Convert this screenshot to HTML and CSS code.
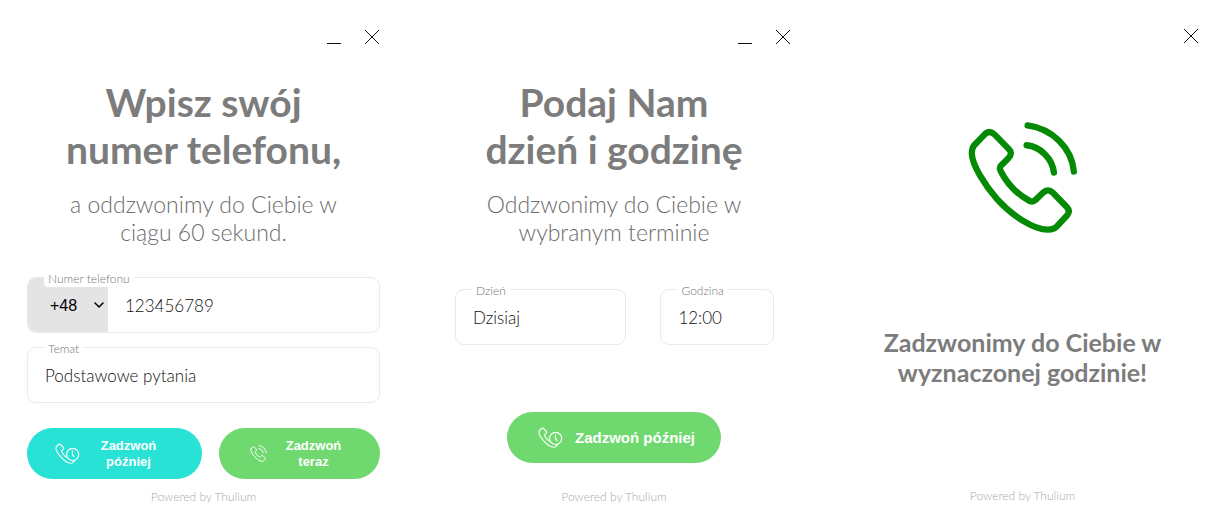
FILE: index.html
```html
<!DOCTYPE html>
<html lang="pl">
<head>
<meta charset="utf-8">
<title>Zamów rozmowę</title>
<meta name="viewport" content="width=device-width, initial-scale=1">
<link rel="stylesheet" href="styles.css">
</head>
<body>
<svg class="sprite" aria-hidden="true">
  <symbol id="call" viewBox="20 20 336 340">
    <path d="M42 92 L72 61 Q87 45 103 61 L144 103 Q159 117 144 132 L123 153 Q115 160 121 171 C140 208 173 242 209 261 Q218 265 225 258 L248 236 Q263 221 278 236 L319 278 Q332 291 320 305 L292 335 Q283 347 262 347 C220 347 155 305 110 255 C75 215 34 152 34 118 Q34 101 42 92 Z"/>
    <path d="M202 33 C275 43 335 100 341 172"/>
    <path d="M199 93 C240 97 277 133 281 175"/>
  </symbol>
  <symbol id="later" viewBox="22 38 375 320">
    <path d="M42 92 L72 61 Q87 45 103 61 L144 103 Q159 117 144 132 L123 153 Q115 160 121 171 C140 208 173 242 209 261 Q218 265 225 258 L248 236 Q263 221 278 236 L319 278 Q332 291 320 305 L292 335 Q283 347 262 347 C220 347 155 305 110 255 C75 215 34 152 34 118 Q34 101 42 92 Z"/>
    <circle cx="288" cy="212" r="92" class="dial"/>
    <path d="M285 158 V216 L308 246"/>
  </symbol>
  <symbol id="close" viewBox="0 0 16 16"><path d="M1 1 L15 15 M15 1 L1 15"/></symbol>
  <symbol id="minimize" viewBox="0 0 16 16"><path d="M1 14.5 H15"/></symbol>
</svg>
<main class="panels">
  <form class="panel">
    <div class="bar">
      <button type="button" class="tool" aria-label="Minimalizuj"><svg><use href="#minimize"/></svg></button>
      <button type="button" class="tool" aria-label="Zamknij"><svg><use href="#close"/></svg></button>
    </div>
    <h1>Wpisz swój<br>numer telefonu,</h1>
    <p class="lead">a oddzwonimy do Ciebie w<br>ciągu 60 sekund.</p>
    <div class="fields stacked">
      <div class="field">
        <label for="phone">Numer telefonu</label>
        <div class="prefix">
          <select aria-label="Numer kierunkowy"><option>+48</option></select>
          <svg class="chevron" viewBox="0 0 20 12" aria-hidden="true"><path d="M2 2 L10 10 L18 2"/></svg>
        </div>
        <input id="phone" type="tel" value="123456789">
      </div>
      <div class="field">
        <label for="topic">Temat</label>
        <select id="topic"><option>Podstawowe pytania</option></select>
      </div>
    </div>
    <div class="actions">
      <button type="button" class="action cyan"><svg class="icon-later"><use href="#later"/></svg><span>Zadzwoń<br>później</span></button>
      <button type="button" class="action now"><svg class="icon-call"><use href="#call"/></svg><span>Zadzwoń<br>teraz</span></button>
    </div>
    <footer>Powered by Thulium</footer>
  </form>

  <form class="panel">
    <div class="bar">
      <button type="button" class="tool" aria-label="Minimalizuj"><svg><use href="#minimize"/></svg></button>
      <button type="button" class="tool" aria-label="Zamknij"><svg><use href="#close"/></svg></button>
    </div>
    <h1>Podaj Nam<br>dzień i godzinę</h1>
    <p class="lead">Oddzwonimy do Ciebie w<br>wybranym terminie</p>
    <div class="fields paired">
      <div class="field">
        <label for="day">Dzień</label>
        <select id="day"><option>Dzisiaj</option></select>
      </div>
      <div class="field">
        <label for="hour">Godzina</label>
        <select id="hour"><option>12:00</option></select>
      </div>
    </div>
    <div class="actions single">
      <button type="button" class="action wide"><svg class="icon-later"><use href="#later"/></svg><span>Zadzwoń później</span></button>
    </div>
    <footer>Powered by Thulium</footer>
  </form>

  <section class="panel done">
    <div class="bar">
      <button type="button" class="tool" aria-label="Zamknij"><svg><use href="#close"/></svg></button>
    </div>
    <svg class="hero"><use href="#call"/></svg>
    <h2>Zadzwonimy do Ciebie w<br>wyznaczonej godzinie!</h2>
    <footer>Powered by Thulium</footer>
  </section>
</main>
</body>
</html>
```
FILE: styles.css
```css
* { box-sizing: border-box; }

body {
  margin: 0;
  background: #fff;
  color: #7c7c7c;
  font-family: Lato, sans-serif;
}

svg {
  display: block;
  fill: none;
  stroke: currentColor;
  stroke-linecap: round;
  stroke-linejoin: round;
}

button, input, select { font: inherit; }

.sprite { position: absolute; width: 0; height: 0; }

.panels {
  display: grid;
  grid-template-columns: 410fr 409fr 402fr;
  min-height: 100vh;
}

.panel {
  display: flex;
  flex-direction: column;
  padding: 29px 28px 12px 27px;
}

.panel:first-child { padding-right: 30px; }

.panel.done { padding: 28px 22px 13px 27px; }

.bar { display: flex; justify-content: flex-end; gap: 22px; }

.tool {
  padding: 0;
  border: 0;
  background: none;
  color: #111;
  cursor: pointer;
}

.tool svg { width: 16px; height: 16px; stroke-linecap: butt; }

h1 {
  margin: 34px 0 0;
  font-size: 39px;
  line-height: 47px;
  font-weight: 700;
  text-align: center;
}

.lead {
  margin: 17px 0 0;
  color: #6c6c6c;
  font-size: 23px;
  line-height: 28px;
  font-weight: 300;
  text-align: center;
}

.fields { color: #111; }

.stacked {
  display: grid;
  gap: 14px;
  margin-top: 31px;
}

.paired {
  display: grid;
  grid-template-columns: 172fr 114fr;
  gap: 34px;
  margin: 43px 17px 0 18px;
}

.field {
  position: relative;
  display: flex;
  height: 56px;
  border: 1px solid #eaeaea;
  border-radius: 9px;
}

.field > label {
  position: absolute;
  top: -7px;
  left: 16px;
  z-index: 1;
  padding: 0 4px;
  border-radius: 4px;
  background: #fff;
  color: #777;
  font-size: 12px;
  line-height: 16px;
  font-weight: 300;
}

.field > input, .field > select {
  flex: 1;
  min-width: 0;
  padding: 0 17px;
  border: 0;
  border-radius: 9px;
  background: none;
  appearance: none;
  color: inherit;
  font-size: 17px;
  font-weight: 300;
}

.prefix {
  display: flex;
  align-items: center;
  width: 80px;
  padding: 0 4px 0 22px;
  border-radius: 8px 0 0 8px;
  background: #e4e4e4;
  color: #000;
}

.prefix select {
  flex: 1;
  min-width: 0;
  padding: 0;
  border: 0;
  background: none;
  appearance: none;
  color: inherit;
  font-family: "Liberation Sans", Arial, sans-serif;
  font-size: 16px;
}

.chevron { width: 10px; height: 6px; stroke-width: 3; }

.actions {
  display: grid;
  grid-template-columns: 175fr 161fr;
  gap: 17px;
  margin-top: 25px;
}

.actions.single {
  display: flex;
  justify-content: center;
  margin-top: 67px;
}

.action {
  --fill: #6fd96f;
  display: flex;
  align-items: center;
  justify-content: center;
  gap: 21px;
  height: 51px;
  padding: 0 18px 0 0;
  border: 0;
  border-radius: 26px;
  background: var(--fill);
  color: #fff;
  font-family: "Liberation Sans", Arial, sans-serif;
  font-size: 13px;
  line-height: 16px;
  font-weight: 700;
  cursor: pointer;
}

.action.cyan { --fill: #28e2d5; }

.action.now { gap: 19px; padding: 0 8px 0 0; }

.action.wide {
  gap: 12px;
  width: 214px;
  padding: 0 0 0 5px;
  font-size: 15px;
}

.icon-later { width: 25px; height: 21px; stroke-width: 17; }
.icon-call { width: 17px; height: 17px; stroke-width: 20; }

.dial { fill: var(--fill); }

.hero {
  width: 112px;
  height: 113px;
  margin: 77px auto 0;
  color: #048a04;
  stroke-width: 19;
}

h2 {
  margin: 93px 0 0;
  font-size: 25px;
  line-height: 30px;
  font-weight: 700;
  text-align: center;
}

footer {
  margin-top: auto;
  color: #aaa;
  font-size: 12px;
  line-height: 14px;
  font-weight: 300;
  text-align: center;
}
```
